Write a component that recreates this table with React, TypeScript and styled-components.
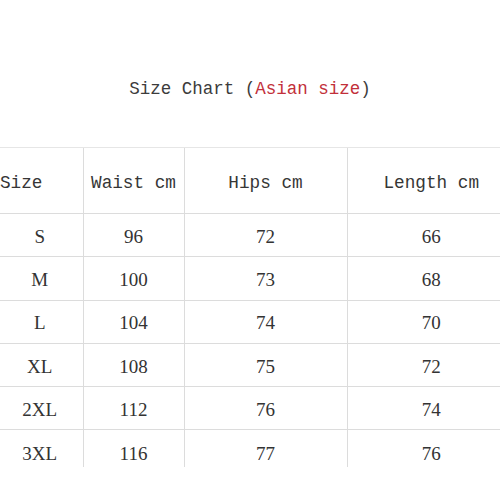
import styled, { createGlobalStyle } from "styled-components";

const GlobalStyle = createGlobalStyle`
  html, body {
    margin: 0;
    padding: 0;
    background: #ffffff;
    overflow: hidden;
  }
`;

const Page = styled.div`
  width: 500px;
  height: 500px;
  overflow: hidden;
  background: #ffffff;
`;

const Title = styled.h1`
  margin: 0;
  padding-top: 78px;
  height: 147px;
  box-sizing: border-box;
  text-align: center;
  font-family: "Liberation Mono", monospace;
  font-weight: normal;
  font-size: 17.5px;
  line-height: 22px;
  color: #3c3c3c;
`;

const Red = styled.span`
  color: #c2303a;
`;

const Table = styled.table`
  margin-left: -3px;
  width: 518px;
  border-collapse: collapse;
  table-layout: fixed;
`;

const Col = styled.col<{ $w: number }>`
  width: ${(p) => p.$w}px;
`;

const HeadCell = styled.th<{ $align?: string }>`
  height: 60px;
  padding: ${(p) => (p.$align === "left" ? "5px 0 0 3px" : "5px 0 0")};
  text-align: ${(p) => p.$align || "center"};
  font-family: "Liberation Mono", monospace;
  font-weight: normal;
  font-size: 17.7px;
  line-height: 22px;
  color: #363636;
  border-top: 1px solid #e6e6e6;
  border-bottom: 1px solid #dcdcdc;
  border-left: 1px solid #dcdcdc;
  &:first-child {
    border-left: none;
  }
`;

const Cell = styled.td<{ $last?: boolean }>`
  height: ${(p) => (p.$last ? "24px" : "39.3px")};
  padding: ${(p) => (p.$last ? "13px 0 0" : "3px 0 0")};
  vertical-align: ${(p) => (p.$last ? "top" : "middle")};
  text-align: center;
  font-family: "Liberation Serif", serif;
  font-size: 19px;
  line-height: 22px;
  color: #333333;
  border-bottom: ${(p) => (p.$last ? "none" : "1px solid #dcdcdc")};
  border-left: 1px solid #dcdcdc;
  &:first-child {
    border-left: none;
  }
`;

const rows = [
  ["S", "96", "72", "66"],
  ["M", "100", "73", "68"],
  ["L", "104", "74", "70"],
  ["XL", "108", "75", "72"],
  ["2XL", "112", "76", "74"],
  ["3XL", "116", "77", "76"],
];

export default function App() {
  return (
    <Page>
      <GlobalStyle />
      <Title>
        Size Chart (<Red>Asian size</Red>)
      </Title>
      <Table>
        <colgroup>
          <Col $w={86} />
          <Col $w={101} />
          <Col $w={163} />
          <Col $w={168} />
        </colgroup>
        <thead>
          <tr>
            <HeadCell $align="left">Size</HeadCell>
            <HeadCell>Waist cm</HeadCell>
            <HeadCell>Hips cm</HeadCell>
            <HeadCell>Length cm</HeadCell>
          </tr>
        </thead>
        <tbody>
          {rows.map((r, i) => (
            <tr key={r[0]}>
              {r.map((v, j) => (
                <Cell key={j} $last={i === rows.length - 1}>
                  {v}
                </Cell>
              ))}
            </tr>
          ))}
        </tbody>
      </Table>
    </Page>
  );
}
